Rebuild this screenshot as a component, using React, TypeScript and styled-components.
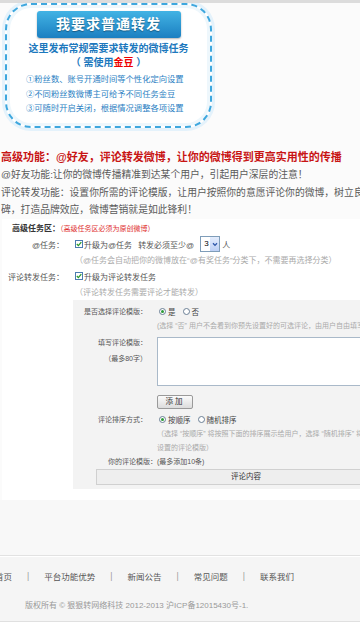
import React from 'react';
import styled, { createGlobalStyle } from 'styled-components';

const GlobalStyle = createGlobalStyle`
  html, body {
    margin: 0;
    padding: 0;
  }
  body {
    width: 360px;
    overflow: hidden;
    background: #fbfbfb;
    font-family: "Liberation Sans", "Noto Sans CJK SC", sans-serif;
    color: #555;
  }
`;

const Page = styled.div`
  width: 360px;
  min-height: 624px;
  border-top: 3px solid #dcdcdc;
  display: flex;
  flex-direction: column;
  overflow: hidden;
`;

const Hero = styled.div`
  padding-left: 5px;
`;

const PromoCard = styled.div`
  width: 207px;
  height: 125px;
  box-sizing: border-box;
  border: 2px dashed #3ea7de;
  border-radius: 26px;
  background: #fff;
  box-shadow: 0 0 0 3px #e4f2fb, inset 0 0 0 3px #eef7fc;
  padding-top: 6px;
  display: flex;
  flex-direction: column;
  align-items: center;
`;

const BigButton = styled.div`
  width: 144px;
  height: 27px;
  border-radius: 3px;
  background: linear-gradient(#42b3e4, #1b7fc1);
  box-shadow: 0 1px 2px rgba(0, 0, 0, 0.3);
  color: #fff;
  font-size: 14px;
  font-weight: bold;
  line-height: 27px;
  text-align: center;
  letter-spacing: 1px;
  text-shadow: 0 1px 1px rgba(0, 0, 0, 0.35);
`;

const PromoTitle = styled.div<{ $top?: number }>`
  margin-top: ${p => p.$top ?? 4}px;
  font-size: 10px;
  font-weight: bold;
  line-height: 14px;
  color: #1c78bd;
  white-space: nowrap;
`;

const Gold = styled.span`
  color: #e00;
`;

const FeatureList = styled.div`
  align-self: stretch;
  padding: 2px 0 0 19px;
  font-size: 8.3px;
  line-height: 14.5px;
  color: #2b7fc3;
  white-space: nowrap;
`;

const Intro = styled.div`
  margin-top: 21px;
  padding-left: 1px;
`;

const RedHeading = styled.div`
  font-size: 11px;
  font-weight: bold;
  line-height: 17px;
  color: #c81414;
  white-space: nowrap;
`;

const IntroLine = styled.div`
  font-size: 9.8px;
  line-height: 17.5px;
  color: #5a5a5a;
  white-space: nowrap;
`;

const FormPanel = styled.div`
  width: 420px;
  margin-left: 2px;
  background: #fff;
  padding: 3px 0 11px;
`;

const PanelTitle = styled.div`
  padding-left: 10px;
  height: 14px;
  line-height: 14px;
  font-size: 8px;
  font-weight: bold;
  color: #333;
  white-space: nowrap;
`;

const RedNote = styled.span`
  font-size: 7px;
  font-weight: normal;
  color: #e03030;
`;

const FieldRow = styled.div<{ $h?: number }>`
  display: grid;
  grid-template-columns: 62px 1fr;
  column-gap: 9px;
  align-items: center;
  height: ${p => p.$h ?? 16}px;
`;

const FieldLabel = styled.div`
  text-align: right;
  font-size: 8px;
  color: #555;
  white-space: nowrap;
`;

const FieldBody = styled.div`
  display: flex;
  align-items: center;
  font-size: 8px;
  color: #555;
  white-space: nowrap;
`;

const Hint = styled.div<{ $size?: number; $lh?: number }>`
  font-size: ${p => p.$size ?? 8}px;
  line-height: ${p => p.$lh ?? 15}px;
  color: #aaa;
  white-space: nowrap;
`;

const MainHint = styled(Hint)`
  padding-left: 73px;
`;

const CheckBox = styled.span`
  width: 8px;
  height: 8px;
  box-sizing: border-box;
  border: 1px solid #4c7cb0;
  background: #fff;
  margin: 0 1px 0 2px;
  display: inline-flex;
  svg {
    display: block;
  }
`;

const Gap = styled.span<{ $w: number }>`
  display: inline-block;
  width: ${p => p.$w}px;
`;

const Select = styled.span`
  display: inline-flex;
  width: 20px;
  height: 16px;
  box-sizing: border-box;
  border: 1px solid #7f9db9;
  background: #fff;
  margin: 0 2px 0 6px;
`;

const SelectValue = styled.span`
  flex: 1;
  padding-left: 3px;
  font-size: 8px;
  line-height: 14px;
  color: #000;
`;

const SelectArrow = styled.span`
  width: 9px;
  background: linear-gradient(#e4edfd, #bccff4);
  display: flex;
  align-items: center;
  justify-content: center;
`;

const SubPanel = styled.div`
  margin-left: 71px;
  background: #f3f3f3;
  padding: 5px 0 4px;
`;

const SubRow = styled.div<{ $h?: number; $top?: number }>`
  display: grid;
  grid-template-columns: 74px 1fr;
  column-gap: 10px;
  align-items: center;
  height: ${p => (p.$h ? `${p.$h}px` : 'auto')};
  margin-top: ${p => p.$top ?? 0}px;
`;

const SubLabel = styled.div<{ $lh?: number }>`
  text-align: right;
  font-size: 7px;
  line-height: ${p => p.$lh ?? 14}px;
  color: #555;
  white-space: nowrap;
  align-self: ${p => (p.$lh ? 'start' : 'center')};
  margin-top: ${p => (p.$lh ? '-2px' : '0')};
`;

const SubBody = styled.div`
  display: flex;
  align-items: center;
  font-size: 7.5px;
  color: #444;
  white-space: nowrap;
`;

const RadioDot = styled.span<{ $on?: boolean }>`
  width: 7px;
  height: 7px;
  box-sizing: border-box;
  border-radius: 50%;
  border: 1px solid #6a7f95;
  background: #fff;
  margin: 0 2px;
  display: inline-flex;
  align-items: center;
  justify-content: center;
  &::after {
    content: '';
    width: 3px;
    height: 3px;
    border-radius: 50%;
    background: ${p => (p.$on ? '#2c9a38' : 'transparent')};
  }
`;

const TemplateBox = styled.div`
  width: 240px;
  height: 49px;
  box-sizing: border-box;
  border: 1px solid #a9b9c9;
  background: #fff;
`;

const AddButton = styled.div`
  width: 36px;
  height: 14px;
  box-sizing: border-box;
  border: 1px solid #9a9a9a;
  border-radius: 2px;
  background: linear-gradient(#fbfbfb, #dcdcdc);
  font-size: 7.5px;
  line-height: 12px;
  text-align: center;
  color: #333;
  letter-spacing: 2px;
`;

const ListCaption = styled.div`
  padding-left: 35px;
  font-size: 7px;
  line-height: 14px;
  color: #555;
  white-space: nowrap;
`;

const TableHead = styled.div`
  margin-left: 23px;
  width: 300px;
  height: 16px;
  box-sizing: border-box;
  border: 1px solid #d0d0d0;
  background: #eeeeee;
  font-size: 7.5px;
  line-height: 14px;
  text-align: center;
  color: #333;
`;

const GreyGap = styled.div`
  height: 55px;
  background: #f8f8f8;
`;

const Footer = styled.div`
  flex: 1;
  background: #f5f5f5;
  border-top: 1px solid #e2e2e2;
  box-shadow: inset 0 1px 0 #fff;
  display: flex;
  flex-direction: column;
`;

const FooterInner = styled.div`
  height: 65px;
  border-bottom: 1px solid #e0e0e0;
`;

const Nav = styled.div`
  display: flex;
  align-items: center;
  gap: 15px;
  margin: 13px 0 0 -5px;
  height: 14px;
  font-size: 8.5px;
  color: #555;
  white-space: nowrap;
`;

const NavSep = styled.span`
  color: #999;
`;

const Copyright = styled.div`
  margin: 17px 0 0 25px;
  font-size: 8px;
  line-height: 12px;
  color: #999;
  white-space: nowrap;
`;

const BottomStrip = styled.div`
  flex: 1;
  background: #fff;
`;

const Tick = () => (
  <svg width="6" height="6" viewBox="0 0 6 6">
    <path d="M0.8 3 L2.4 4.6 L5.3 1.2" stroke="#2a9a2a" strokeWidth="1.3" fill="none" />
  </svg>
);

const Chevron = () => (
  <svg width="6" height="5" viewBox="0 0 6 5">
    <path d="M1 1.3 L3 3.4 L5 1.3" stroke="#2c55a8" strokeWidth="1.3" fill="none" />
  </svg>
);

const navItems = ['首页', '平台功能优势', '新闻公告', '常见问题', '联系我们'];

const App = () => {
  return (
    <Page>
      <GlobalStyle />
      <Hero>
        <PromoCard>
          <BigButton>我要求普通转发</BigButton>
          <PromoTitle>这里发布常规需要求转发的微博任务</PromoTitle>
          <PromoTitle $top={0}>
            （ 需使用<Gold>金豆</Gold> ）
          </PromoTitle>
          <FeatureList>
            <div>①粉丝数、账号开通时间等个性化定向设置</div>
            <div>②不同粉丝数微博主可给予不同任务金豆</div>
            <div>③可随时开启关闭，根据情况调整各项设置</div>
          </FeatureList>
        </PromoCard>
      </Hero>

      <Intro>
        <RedHeading>高级功能：@好友，评论转发微博，让你的微博得到更高实用性的传播</RedHeading>
        <IntroLine>@好友功能:让你的微博传播精准到达某个用户，引起用户深层的注意！</IntroLine>
        <IntroLine>评论转发功能：设置你所需的评论模版，让用户按照你的意愿评论你的微博，树立良好口</IntroLine>
        <IntroLine>碑，打造品牌效应，微博营销就是如此锋利！</IntroLine>
      </Intro>

      <FormPanel>
        <PanelTitle>
          高级任务区：<RedNote>（高级任务区必须为原创微博）</RedNote>
        </PanelTitle>
        <FieldRow $h={17}>
          <FieldLabel>@任务：</FieldLabel>
          <FieldBody>
            <CheckBox><Tick /></CheckBox>升级为@任务<Gap $w={6} />转发必须至少@
            <Select>
              <SelectValue>3</SelectValue>
              <SelectArrow><Chevron /></SelectArrow>
            </Select>
            人
          </FieldBody>
        </FieldRow>
        <MainHint>（@任务会自动把你的微博放在“@有奖任务”分类下，不需要再选择分类）</MainHint>
        <FieldRow $h={17}>
          <FieldLabel>评论转发任务：</FieldLabel>
          <FieldBody>
            <CheckBox><Tick /></CheckBox>升级为评论转发任务
          </FieldBody>
        </FieldRow>
        <MainHint>（评论转发任务需要评论才能转发）</MainHint>

        <SubPanel>
          <SubRow $h={14}>
            <SubLabel>是否选择评论模版：</SubLabel>
            <SubBody>
              <RadioDot $on />是<Gap $w={5} /><RadioDot />否
            </SubBody>
          </SubRow>
          <SubRow>
            <span />
            <Hint $size={7} $lh={13}>(选择 “否” 用户不会看到你预先设置好的可选评论，由用户自由填写评论)</Hint>
          </SubRow>
          <SubRow $top={5}>
            <SubLabel $lh={16}>
              填写评论模版：
              <br />
              （最多80字）
            </SubLabel>
            <TemplateBox />
          </SubRow>
          <SubRow $top={9}>
            <span />
            <AddButton>添加</AddButton>
          </SubRow>
          <SubRow $h={14} $top={4}>
            <SubLabel>评论排序方式：</SubLabel>
            <SubBody>
              <RadioDot $on />按顺序<Gap $w={5} /><RadioDot />随机排序
            </SubBody>
          </SubRow>
          <SubRow>
            <span />
            <Hint $size={7} $lh={14}>
              （选择 “按顺序” 将按照下面的排序展示给用户，选择 “随机排序” 将随机展示你预先
              <br />
              设置的评论模版）
            </Hint>
          </SubRow>
          <ListCaption>你的评论模版：(最多添加10条)</ListCaption>
          <TableHead>评论内容</TableHead>
        </SubPanel>
      </FormPanel>

      <GreyGap />

      <Footer>
        <FooterInner>
          <Nav>
            {navItems.map((item, i) => (
              <React.Fragment key={item}>
                {i > 0 && <NavSep>|</NavSep>}
                <span>{item}</span>
              </React.Fragment>
            ))}
          </Nav>
          <Copyright>版权所有 © 狠狠转网络科技 2012-2013 沪ICP备12015430号-1.</Copyright>
        </FooterInner>
        <BottomStrip />
      </Footer>
    </Page>
  );
};

export default App;
